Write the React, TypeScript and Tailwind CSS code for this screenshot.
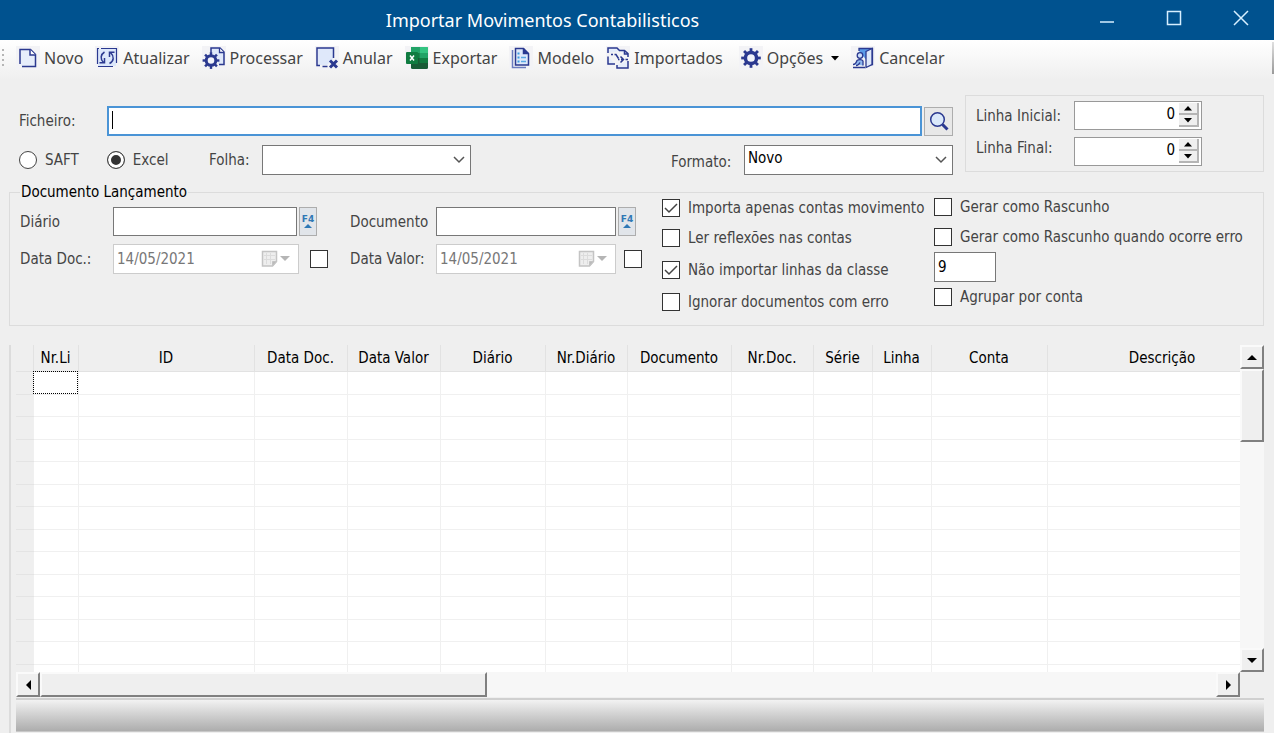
import React from 'react';

const Doc = () => (
  <svg width="22" height="22" viewBox="0 0 22 22" fill="none" stroke="#2b3990" strokeWidth="1.5">
    <path d="M3 17V2.500h10.500l5 5V19.500H5" fill="#e6edfb" />
    <path d="M13 2.500V8h5.500" fill="#fff" />
  </svg>
);

const Refresh = () => (
  <svg width="22" height="22" viewBox="0 0 22 22" fill="none" stroke="#2b3990" strokeWidth="1.5">
    <path d="M2 2h18v17H2z" fill="#dce7fb" stroke="none" />
    <path d="M5 1.500H20.500V16M17 19.500H2M1.500 17V1.500H3" strokeWidth="1.200" />
    <path d="M8.500 5C4.500 7.500 4 12 7.500 15.500M8.500 11V15.800H3.500" />
    <path d="M13.500 16.500C18 14 18.500 9.500 14.500 5.500M13.500 10V5.200H18.500" />
  </svg>
);

const teeth = [0, 45, 90, 135, 180, 225, 270, 315];

const Cog = ({ cx, cy, r }: { cx: number; cy: number; r: number }) => (
  <g transform={`translate(${cx} ${cy})`} fill="#2b3990">
    {teeth.map((a) => (
      <rect key={a} x={-r * 0.2} y={-r * 1.4} width={r * 0.4} height={r * 0.6} transform={`rotate(${a})`} />
    ))}
    <circle r={r * 0.8} fill="#f2f4fb" stroke="#2b3990" strokeWidth={r * 0.5} />
  </g>
);

const Process = () => (
  <svg width="24" height="24" viewBox="0 0 24 24" fill="none">
    <path d="M9 6V2h9l4 4v12.500h-5" fill="#dfe8fa" stroke="#2b3990" strokeWidth="1.500" />
    <path d="M17.500 2v4.500H22" fill="#fff" stroke="#2b3990" strokeWidth="1.300" />
    <Cog cx={9} cy={14.5} r={6} />
  </svg>
);

const Undo = () => (
  <svg width="24" height="24" viewBox="0 0 24 24" fill="none" stroke="#2b3990" strokeWidth="1.5">
    <path d="M3 2h15v11l-6 6H3z" fill="#dfe8fa" stroke="none" />
    <path d="M5 19.500H2V2H18.500V12M7.500 20.500h5" />
    <path d="M15 14.500l7 7M22 14.500l-7 7" strokeWidth="3" />
  </svg>
);

const Excel = () => (
  <svg width="24" height="24" viewBox="0 0 24 24">
    <rect x="6" y="1" width="17" height="22" rx="1.500" fill="#185c37" />
    <path d="M6 1h8.500v6H6z" fill="#21a366" />
    <path d="M14.500 1H22a1 1 0 0 1 1 1v5h-8.500z" fill="#33c481" />
    <path d="M6 7h8.500v5H6z" fill="#107c41" />
    <path d="M14.500 7H23v5h-8.500z" fill="#21a366" />
    <path d="M14.500 12H23v5h-8.500z" fill="#107c41" />
    <rect x="1" y="6" width="12" height="12" rx="1" fill="#107c41" />
    <path d="M5 9.500l4 5M9 9.500l-4 5" stroke="#fff" strokeWidth="1.500" />
  </svg>
);

const Model = () => (
  <svg width="22" height="22" viewBox="0 0 22 22" fill="none" stroke="#2b3990" strokeWidth="1.5">
    <path d="M5.500 1.500h8l5 5v11.500h-13z" fill="#dfe8fa" />
    <path d="M13.500 1.500v5h5" fill="#2b3990" />
    <path d="M2.500 3v17.500H16" stroke="#6b7cc0" />
    <path d="M7.500 6.500h2M7.500 10.500h2M7.500 14.500h2" stroke="#3d9be0" strokeWidth="2" />
    <path d="M11 10.500h5M11 14.500h5" stroke="#5aa8e4" />
  </svg>
);

const Imported = () => (
  <svg width="24" height="24" viewBox="0 0 24 24" fill="none" stroke="#2b3990" strokeWidth="1.5">
    <path d="M2 7V2h9l3 3M2 10.500V18h7" fill="#e6edfb" />
    <path d="M14 4.500h4.500l3.500 3V11M22 15v7H11v-3M18.500 4.500V8H22" fill="#e6edfb" />
    <path d="M5 8.500h2M8.500 8.500h1.500l2.500 4M12 13.500h1.500M15 13.500h2M14.500 10.500l3 3-3 3M19.500 13.500H22" />
  </svg>
);

const Gear = () => (
  <svg width="24" height="24" viewBox="0 0 24 24">
    <Cog cx={12} cy={12} r={7} />
  </svg>
);

const Exit = () => (
  <svg width="22" height="22" viewBox="0 0 22 22" fill="none" stroke="#2b3990" strokeWidth="1.3">
    <path d="M7 4V1.500h13.500v16H18" fill="#5b9be8" />
    <path d="M14 4.500l6-3v16l-6 3z" fill="#dfe8fa" />
    <circle cx="8" cy="8.500" r="2.800" fill="#cfe0fa" />
    <path d="M1 17.500c2 0 3-1 4-4 2-1.500 5-1 6 .5v4.500M1 20.500h12M8 15.500c-1 2-2 3-4 3" fill="#8fb8f0" />
  </svg>
);

const tools = [
  { label: 'Novo', icon: <Doc /> },
  { label: 'Atualizar', icon: <Refresh /> },
  { label: 'Processar', icon: <Process /> },
  { label: 'Anular', icon: <Undo /> },
  { label: 'Exportar', icon: <Excel /> },
  { label: 'Modelo', icon: <Model /> },
  { label: 'Importados', icon: <Imported /> },
  { label: 'Opções', icon: <Gear />, menu: true },
  { label: 'Cancelar', icon: <Exit /> },
];

const columns = [
  { label: 'Nr.Li', width: 45 },
  { label: 'ID', width: 176 },
  { label: 'Data Doc.', width: 93 },
  { label: 'Data Valor', width: 93 },
  { label: 'Diário', width: 105 },
  { label: 'Nr.Diário', width: 82 },
  { label: 'Documento', width: 104 },
  { label: 'Nr.Doc.', width: 82 },
  { label: 'Série', width: 59 },
  { label: 'Linha', width: 59 },
  { label: 'Conta', width: 116 },
  { label: 'Descrição', width: 230 },
];

const Arrow = ({ dir }: { dir: 'up' | 'down' | 'left' | 'right' }) => {
  const points = {
    up: '0,8 10,8 5,3',
    down: '0,3 10,3 5,8',
    left: '8,0 8,10 3,5',
    right: '3,0 3,10 8,5',
  };
  return (
    <svg width="10" height="10" viewBox="0 0 10 10">
      <polygon points={points[dir]} />
    </svg>
  );
};

const TitleBar = () => (
  <header className="flex h-10 shrink-0 items-center bg-[#00528f] text-white">
    <h1 className="flex-1 pl-3 text-center font-['Noto_Sans',sans-serif] text-[18px]">Importar Movimentos Contabilisticos</h1>
    <button aria-label="Minimizar" className="flex h-full w-[67px] items-center justify-center">
      <svg width="16" height="16" stroke="#d6efff" strokeWidth="1.5"><path d="M1 10h14" /></svg>
    </button>
    <button aria-label="Maximizar" className="flex h-full w-[67px] items-center justify-center pb-1">
      <svg width="16" height="16" fill="none" stroke="#d6efff" strokeWidth="1.5"><rect x="1.500" y="1.500" width="13" height="13" /></svg>
    </button>
    <button aria-label="Fechar" className="flex h-full w-[67px] items-center justify-center pb-1">
      <svg width="16" height="16" stroke="#d6efff" strokeWidth="1.5"><path d="M1 1l14 14M15 1L1 15" /></svg>
    </button>
  </header>
);

const Toolbar = () => (
  <nav className="flex h-10 shrink-0 items-center bg-linear-to-b from-white to-[#efefef] pb-1 font-['Noto_Sans',sans-serif] text-[16px] text-[#444]">
    <svg width="4" height="20" className="ml-[2px] mr-[10px]" fill="#b5b5b5">
      <rect y="1" width="2" height="2" />
      <rect y="6" width="2" height="2" />
      <rect y="11" width="2" height="2" />
      <rect y="16" width="2" height="2" />
    </svg>
    <div className="flex items-center gap-3">
      {tools.map((t) => (
        <button key={t.label} className={t.menu ? 'flex items-center gap-1 pl-1' : 'flex items-center gap-1'}>
          <span className="flex size-6 items-center justify-center bg-[#f3f3f6]">{t.icon}</span>
          {t.label}
          {t.menu && (
            <svg width="8" height="5" className="ml-1" fill="#000"><path d="M0 0h8l-4 4.500z" /></svg>
          )}
        </button>
      ))}
    </div>
    <div className="ml-auto h-8 w-[2px] bg-linear-to-b from-[#e0e0e0] to-[#999]" />
  </nav>
);

const Select = ({ id, value }: { id: string; value: string }) => (
  <div className="relative w-[209px]">
    <select id={id} className="block h-[30px] w-full appearance-none border border-[#777] bg-white pb-1 pl-[3px] text-black">
      <option>{value}</option>
    </select>
    <svg width="12" height="8" className="pointer-events-none absolute right-[6px] top-[11px]" fill="none" stroke="#555" strokeWidth="1.5">
      <path d="M1 1l5 5 5-5" />
    </svg>
  </div>
);

const Radio = ({ label, checked }: { label: string; checked?: boolean }) => (
  <label className="flex items-center gap-2">
    <input
      type="radio"
      name="source"
      defaultChecked={checked}
      className="size-[18px] appearance-none rounded-full border border-[#444] bg-white checked:bg-[#333] checked:shadow-[inset_0_0_0_3px_#fff]"
    />
    {label}
  </label>
);

const Check = ({ label, checked, name }: { label?: string; checked?: boolean; name?: string }) => (
  <label className="flex items-center gap-2 whitespace-nowrap">
    <span className="relative size-[18px]">
      <input
        type="checkbox"
        defaultChecked={checked}
        aria-label={name}
        className="peer block size-[18px] appearance-none border border-[#333] bg-white"
      />
      <svg width="18" height="18" className="pointer-events-none absolute inset-0 hidden peer-checked:block" fill="none" stroke="#444" strokeWidth="1.5">
        <path d="M3 9l4 4 8-8" />
      </svg>
    </span>
    {label}
  </label>
);

const Spinner = ({ id }: { id: string }) => (
  <div className="flex h-[29px] w-[128px] border border-[#999] bg-white pt-px">
    <input id={id} defaultValue="0" className="w-0 flex-1 pb-1 pr-1 text-right text-black outline-none" />
    <div className="flex w-[22px] flex-col pr-[2px]">
      <button aria-label="Aumentar" className="flex h-3 items-center justify-center border-b-2 border-r-2 border-[#b5b5b5] bg-[#efefef]">
        <svg width="8" height="5"><path d="M0 4.500h8L4 0z" /></svg>
      </button>
      <button aria-label="Diminuir" className="flex h-3 items-center justify-center border-b-2 border-r-2 border-[#b5b5b5] bg-[#efefef]">
        <svg width="8" height="5"><path d="M0 0h8L4 4.500z" /></svg>
      </button>
    </div>
  </div>
);

const LookupField = ({ id }: { id: string }) => (
  <div className="flex flex-1 gap-[2px]">
    <input id={id} className="h-[29px] w-0 flex-1 border border-[#777] bg-white px-1" />
    <button
      aria-label="Procurar"
      className="flex h-[29px] w-[18px] flex-col items-center justify-center border border-[#adadad] bg-[#e1e5ea] font-['DejaVu_Sans',sans-serif] text-[9px] leading-[9px] font-bold text-[#2f78b5]"
    >
      F4
      <svg width="8" height="4" fill="#2f78b5"><path d="M0 4h8L4 0z" /></svg>
    </button>
  </div>
);

const DateField = ({ id }: { id: string }) => (
  <div className="flex h-[30px] flex-1 items-center border border-[#ccc] bg-white pl-[3px] pr-2">
    <input id={id} disabled defaultValue="14/05/2021" className="w-0 flex-1 text-[#777]" />
    <svg width="29" height="18" fill="none" stroke="#c4c4c4">
      <path d="M1.500 1.500h14v10l-4 4.500h-10z" fill="#eee" strokeWidth="1.5" />
      <path d="M5.500 3v11M9.500 3v11M3 5.500h11M3 9.500h11" stroke="#dcdcdc" />
      <path d="M15.500 11.500h-4v4.500z" fill="#bbb" />
      <path d="M19 6h10l-5 5z" fill="#b5b5b5" stroke="none" />
    </svg>
  </div>
);

const SourceForm = () => (
  <section className="flex items-start pl-[19px]">
    <div className="flex flex-1 flex-col gap-[9px] pt-[11px]">
      <div className="flex items-center">
        <label htmlFor="ficheiro" className="w-[88px]">Ficheiro:</label>
        <div className="relative flex-1">
          <input id="ficheiro" className="block h-[30px] w-full border-2 border-[#4a94d6] bg-white px-1 outline-none" />
          <span className="absolute left-[5px] top-[5px] h-[18px] w-px bg-black" />
        </div>
        <button aria-label="Abrir ficheiro" className="ml-[2px] flex h-[29px] w-[29px] items-center justify-center border border-[#adadad] bg-[#e8e8e8]">
          <svg width="20" height="20" fill="none" stroke="#2b3990">
            <circle cx="8.500" cy="8.500" r="6.800" fill="#dbe9fb" strokeWidth="1.5" />
            <path d="M13.500 13.500l5 5" strokeWidth="3" />
          </svg>
        </button>
      </div>
      <div className="flex items-center">
        <div className="flex w-[190px] gap-7">
          <Radio label="SAFT" />
          <Radio label="Excel" checked />
        </div>
        <label htmlFor="folha" className="w-[53px]">Folha:</label>
        <Select id="folha" value="" />
        <label htmlFor="formato" className="ml-auto w-[73px] pt-1">Formato:</label>
        <Select id="formato" value="Novo" />
      </div>
    </div>
    <div className="ml-3 flex w-[299px] border border-[#dcdcdc] pb-[5px] pl-[10px] pt-[5px]">
      <div className="flex w-[98px] flex-col gap-3 pt-[5px]">
        <label htmlFor="inicial">Linha Inicial:</label>
        <label htmlFor="final">Linha Final:</label>
      </div>
      <div className="flex flex-col gap-[7px]">
        <Spinner id="inicial" />
        <Spinner id="final" />
      </div>
    </div>
  </section>
);

const EntryForm = () => (
  <fieldset className="ml-[9px] mt-[7px] border border-[#dcdcdc] pb-2 pl-[10px]">
    <legend className="px-px text-black">Documento Lançamento</legend>
    <div className="flex">
      <div className="flex w-[642px] flex-col gap-2 pt-[5px]">
        <div className="flex">
          <div className="flex w-[330px] items-center pr-[33px]">
            <label htmlFor="diario" className="w-[93px]">Diário</label>
            <LookupField id="diario" />
          </div>
          <div className="flex w-[312px] items-center pr-[26px]">
            <label htmlFor="documento" className="w-[86px]">Documento</label>
            <LookupField id="documento" />
          </div>
        </div>
        <div className="flex">
          <div className="flex w-[330px] items-center gap-[11px] pr-[22px]">
            <div className="flex flex-1 items-center">
              <label htmlFor="datadoc" className="w-[93px]">Data Doc.:</label>
              <DateField id="datadoc" />
            </div>
            <Check name="Usar data do documento" />
          </div>
          <div className="flex w-[312px] items-center gap-2 pr-5">
            <div className="flex flex-1 items-center">
              <label htmlFor="datavalor" className="w-[86px]">Data Valor:</label>
              <DateField id="datavalor" />
            </div>
            <Check name="Usar data valor" />
          </div>
        </div>
      </div>
      <div className="-mt-[9px] flex w-[272px] flex-col">
        <div className="flex h-[30px] items-center"><Check label="Importa apenas contas movimento" checked /></div>
        <div className="flex h-[30px] items-center"><Check label="Ler reflexões nas contas" /></div>
        <div className="flex h-[34px] items-center"><Check label="Não importar linhas da classe" checked /></div>
        <div className="flex h-[30px] items-center"><Check label="Ignorar documentos com erro" /></div>
      </div>
      <div className="-mt-[10px] flex flex-col">
        <div className="flex h-[30px] items-center"><Check label="Gerar como Rascunho" /></div>
        <div className="flex h-[30px] items-center"><Check label="Gerar como Rascunho quando ocorre erro" /></div>
        <input aria-label="Classe" defaultValue="9" className="h-[30px] w-[62px] border border-[#777] bg-white pl-[3px] text-black" />
        <div className="flex h-[30px] items-center"><Check label="Agrupar por conta" /></div>
      </div>
    </div>
  </fieldset>
);

const bevel = 'flex shrink-0 items-center justify-center border-2 border-t-[#fafafa] border-l-[#fafafa] border-b-[#808080] border-r-[#808080] bg-[#efefef]';

const Grid = () => (
  <section className="ml-[9px] mt-[19px] flex min-h-0 flex-1 flex-col border-l-2 border-[#dcdcdc] pl-[5px]">
    <div className="flex min-h-0 flex-1">
      <div className="w-0 flex-1 overflow-hidden bg-white">
        <table className="w-[1261px] table-fixed border-collapse text-black">
          <colgroup>
            <col style={{ width: 17 }} />
            {columns.map((c) => (
              <col key={c.label} style={{ width: c.width }} />
            ))}
          </colgroup>
          <thead>
            <tr className="h-[26px] bg-[#efefef]">
              <th className="border-b border-[#e2e2e2]" />
              {columns.map((c) => (
                <th key={c.label} className="whitespace-nowrap border-x border-b border-[#e2e2e2] p-0 font-normal">
                  {c.label}
                </th>
              ))}
            </tr>
          </thead>
          <tbody>
            {Array.from({ length: 14 }, (_, row) => (
              <tr key={row} className="odd:h-[23px] even:h-[22px]">
                <td className="border-b border-[#e4e4e4] bg-[#efefef] p-0" />
                {columns.map((c, i) => (
                  <td
                    key={c.label}
                    className={
                      row === 0 && i === 0
                        ? 'border border-[#f0f0f0] p-0 outline-1 -outline-offset-1 outline-dotted outline-black'
                        : 'border border-[#f0f0f0] p-0'
                    }
                  />
                ))}
              </tr>
            ))}
          </tbody>
        </table>
      </div>
      <div className="flex w-6 flex-col bg-[#f7f7f7]">
        <button aria-label="Subir" className={`${bevel} h-6`}><Arrow dir="up" /></button>
        <div className={`${bevel} h-[73px]`} />
        <button aria-label="Descer" className={`${bevel} mt-auto h-6`}><Arrow dir="down" /></button>
      </div>
    </div>
    <div className="mr-6 flex h-[25px] shrink-0 bg-[#f7f7f7]">
      <button aria-label="Esquerda" className={`${bevel} w-6`}><Arrow dir="left" /></button>
      <div className={`${bevel} w-[447px]`} />
      <button aria-label="Direita" className={`${bevel} ml-auto w-6`}><Arrow dir="right" /></button>
    </div>
    <div className="mb-px mt-px h-[34px] shrink-0 border-b border-t-2 border-b-[#c8c8c8] border-t-[#d0d0d0] bg-linear-to-b from-[#f2f2f2] to-[#adadad]" />
  </section>
);

export default function App() {
  return (
    <div className="flex h-screen flex-col overflow-hidden bg-[#efefef] font-['DejaVu_Sans_Condensed','DejaVu_Sans',sans-serif] text-[15px] leading-5 text-[#444]">
      <TitleBar />
      <Toolbar />
      <main className="flex min-h-0 flex-1 flex-col pr-[10px] pt-[15px]">
        <SourceForm />
        <EntryForm />
        <Grid />
      </main>
    </div>
  );
}
